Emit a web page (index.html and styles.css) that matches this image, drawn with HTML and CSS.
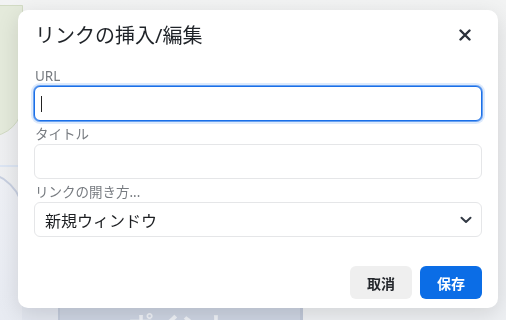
FILE: index.html
```html
<!DOCTYPE html>
<html lang="ja">
<head>
    <meta charset="UTF-8">
    <title>リンクの挿入/編集</title>
    <meta name="viewport" content="width=device-width, initial-scale=1.0">
    <link rel="stylesheet" href="styles.css">
</head>
<body>
    <div class="backdrop">
        <div class="bg-green"></div>
        <div class="bg-line"></div>
        <div class="bg-ring"></div>
        <div class="bg-strip"></div>
        <div class="bg-panel"><span>ポイント</span></div>
    </div>

    <div class="dialog">
        <div class="dialog-head">
            <div class="dialog-title">リンクの挿入/編集</div>
            <button class="close-btn" aria-label="閉じる">
                <svg width="12" height="12" viewBox="0 0 12 12">
                    <path d="M1.5 1.5 L10.5 10.5 M10.5 1.5 L1.5 10.5" stroke="#2b313b" stroke-width="2.4" stroke-linecap="round" fill="none"/>
                </svg>
            </button>
        </div>

        <div class="field">
            <label>URL</label>
            <input class="input focused" type="text">
        </div>
        <div class="field">
            <label>タイトル</label>
            <input class="input" type="text">
        </div>
        <div class="field">
            <label>リンクの開き方...</label>
            <div class="input select">
                <span>新規ウィンドウ</span>
                <svg width="12" height="8" viewBox="0 0 12 8">
                    <path d="M1.5 1.8 L6 6 L10.5 1.8" stroke="#333a45" stroke-width="2" stroke-linecap="round" stroke-linejoin="round" fill="none"/>
                </svg>
            </div>
        </div>

        <div class="dialog-foot">
            <button class="btn btn-cancel">取消</button>
            <button class="btn btn-save">保存</button>
        </div>
    </div>
</body>
</html>
```

FILE: styles.css
```css
body {
    margin: 0;
    padding: 10px 0 0 18px;
    background: #eff0f2;
    font-family: 'Noto Sans', 'Noto Sans CJK JP', sans-serif;
    overflow: hidden;
    height: 320px;
    box-sizing: border-box;
}

/* page behind the dialog */
.backdrop {
    position: fixed;
    inset: 0;
    z-index: -1;
    background: linear-gradient(#f2f3f3, #eeeff1 40%, #eef0f3);
}
.bg-green {
    position: absolute;
    left: -40px;
    top: 5px;
    width: 61px;
    height: 130px;
    background: #e4eadb;
    border: 1px solid #d2dbc4;
    border-radius: 0 0 34px 0;
}
.bg-line {
    position: absolute;
    left: 0;
    top: 165px;
    width: 20px;
    height: 2px;
    background: #dce5f3;
}
.bg-ring {
    position: absolute;
    left: -64px;
    top: 171px;
    width: 84px;
    height: 260px;
    background: linear-gradient(#eef0f5, #e3e7f0);
    border: 2px solid #c7cfe0;
    border-radius: 44px 44px 0 0;
}
.bg-strip {
    position: absolute;
    left: 22px;
    top: 240px;
    width: 36px;
    height: 90px;
    background: #e2e6ef;
    border-right: 3px solid #c3cbdb;
}
.bg-panel {
    position: absolute;
    left: 60px;
    top: 250px;
    width: 240px;
    height: 80px;
    background: #cdd4e2;
    border-right: 3px solid #c0c8d8;
    display: flex;
    justify-content: center;
    align-items: flex-end;
}
.bg-panel span {
    color: #eef1f6;
    font-size: 26px;
    font-weight: 700;
    margin-bottom: -14px;
}

/* dialog */
.dialog {
    width: 480px;
    box-sizing: border-box;
    background: #fff;
    border-radius: 10px;
    box-shadow: 0 6px 22px rgba(0,0,0,0.12);
    padding: 12px 16px 9px 16px;
}
.dialog-head {
    display: flex;
    justify-content: space-between;
    align-items: center;
    height: 28px;
    margin-bottom: 17px;
}
.dialog-title {
    font-size: 20px;
    line-height: 28px;
    color: #1f2328;
    padding-left: 1px;
}
.close-btn {
    width: 24px;
    height: 24px;
    padding: 0;
    margin: -2px 5px 0 0;
    border: none;
    background: transparent;
    display: flex;
    align-items: center;
    justify-content: center;
    cursor: pointer;
}
.field + .field {
    margin-top: 4px;
}
.field label {
    display: block;
    font-size: 13.5px;
    line-height: 18px;
    color: #777b80;
    margin-bottom: 1px;
    padding-left: 1px;
}
.input {
    display: block;
    width: 100%;
    height: 35px;
    box-sizing: border-box;
    border: 1px solid #e5e6e8;
    border-radius: 6px;
    padding: 0 10px;
    font-family: inherit;
    font-size: 16px;
    color: #1d1f22;
    outline: none;
    background: #fff;
}
.input.focused {
    border-color: #1a6fe8;
    box-shadow: 0 0 0 1px rgba(26,111,232,0.6), 0 0 0 3px rgba(26,111,232,0.15);
    background: linear-gradient(#222, #222) no-repeat 6px 9px / 1px 16px, #fff;
    caret-color: transparent;
}
.select {
    display: flex;
    align-items: center;
    justify-content: space-between;
    padding: 0 9px 0 10px;
}
.dialog-foot {
    display: flex;
    justify-content: flex-end;
    gap: 8px;
    margin-top: 29px;
}
.btn {
    height: 33px;
    padding: 0 17px;
    border: none;
    border-radius: 6px;
    font-family: inherit;
    font-size: 14px;
    font-weight: 700;
    cursor: pointer;
}
.btn-cancel {
    background: #efefef;
    color: #23262b;
}
.btn-save {
    background: #0b6de6;
    color: #fff;
}
```
